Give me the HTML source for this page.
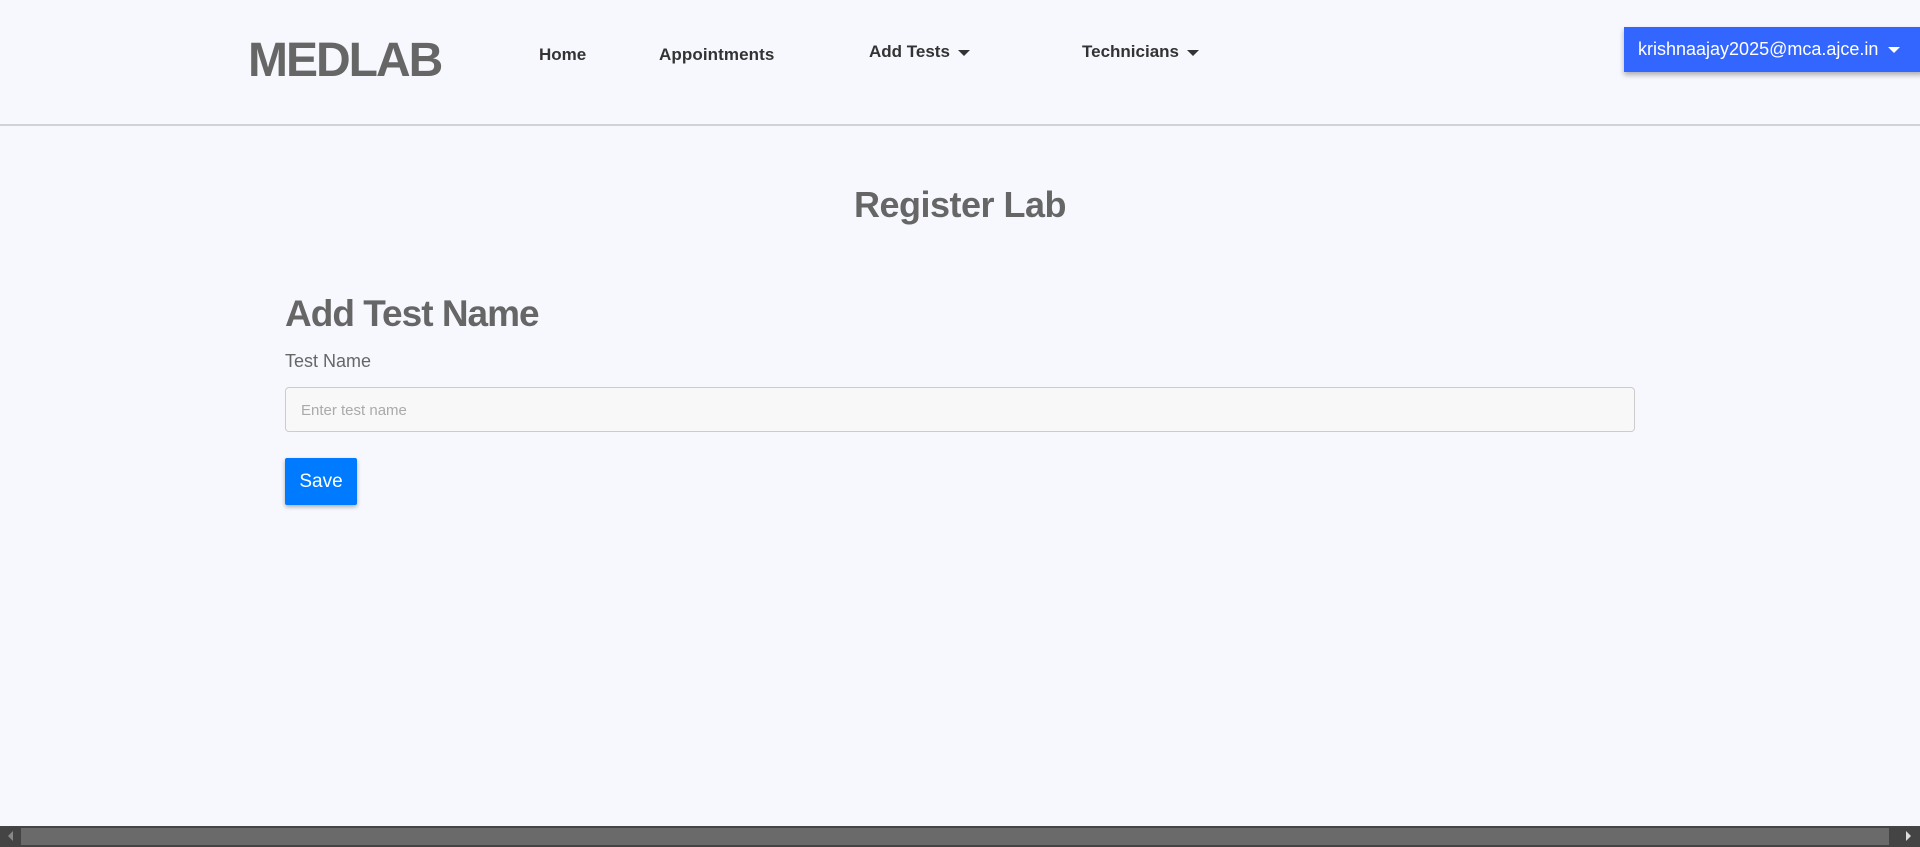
<!DOCTYPE html>
<html><head><meta charset="utf-8"><style>
*{margin:0;padding:0;box-sizing:border-box}
body{width:1920px;height:847px;background:#f7f8fe;font-family:"Liberation Sans",sans-serif;position:relative;overflow:hidden;color:#666}
.a{position:absolute;white-space:nowrap}
.nav{font-weight:bold;font-size:17px;color:#333}
.caret{display:inline-block;width:0;height:0;border-left:6px solid transparent;border-right:6px solid transparent;border-top:6px solid #333;vertical-align:middle;margin-left:8px}
</style></head><body>
<div class="a" style="left:248px;top:33px;font-size:48px;font-weight:bold;color:#666;letter-spacing:-2px">MEDLAB</div>
<div class="a nav" style="left:539px;top:45px">Home</div>
<div class="a nav" style="left:659px;top:45px;letter-spacing:0.1px">Appointments</div>
<div class="a nav" style="left:869px;top:42px">Add Tests<span class="caret"></span></div>
<div class="a nav" style="left:1082px;top:42px">Technicians<span class="caret"></span></div>
<div class="a" style="left:1624px;top:27px;width:300px;height:45px;background:#3366ff;box-shadow:0 3px 5px rgba(0,0,0,.3);color:#fff;font-size:18px;padding:12px 0 0 14px">krishnaajay2025@mca.ajce.in<span class="caret" style="border-top-color:#fff;margin-left:10px"></span></div>
<div class="a" style="left:0;top:124px;width:1920px;height:2px;background:#d2d2d6"></div>
<div class="a" style="left:0;top:184px;width:1920px;text-align:center;font-size:36px;font-weight:bold;color:#666;letter-spacing:-0.5px">Register Lab</div>
<div class="a" style="left:285px;top:293px;font-size:37px;font-weight:bold;color:#666;letter-spacing:-1px">Add Test Name</div>
<div class="a" style="left:285px;top:351px;font-size:18px;color:#666">Test Name</div>
<div class="a" style="left:285px;top:387px;width:1350px;height:45px;background:#f8f8f8;border:1px solid #ccc;border-radius:4px;font-size:15px;color:#aaa;padding:14px 0 0 15px">Enter test name</div>
<div class="a" style="left:285px;top:458px;width:72px;height:47px;background:#007bff;border-radius:2px;box-shadow:0 2px 4px rgba(0,0,0,.3);color:#fff;font-size:19px;text-align:center;padding-top:13px">Save</div>
<div class="a" style="left:0;top:826px;width:1920px;height:21px;background:#444"></div>
<div class="a" style="left:21px;top:828px;width:1868px;height:17px;background:#6a6a6a"></div>
<div class="a" style="left:8px;top:831px;width:0;height:0;border-top:5px solid transparent;border-bottom:5px solid transparent;border-right:5px solid #888"></div>
<div class="a" style="left:1906px;top:831px;width:0;height:0;border-top:5px solid transparent;border-bottom:5px solid transparent;border-left:5px solid #ddd"></div>
</body></html>
